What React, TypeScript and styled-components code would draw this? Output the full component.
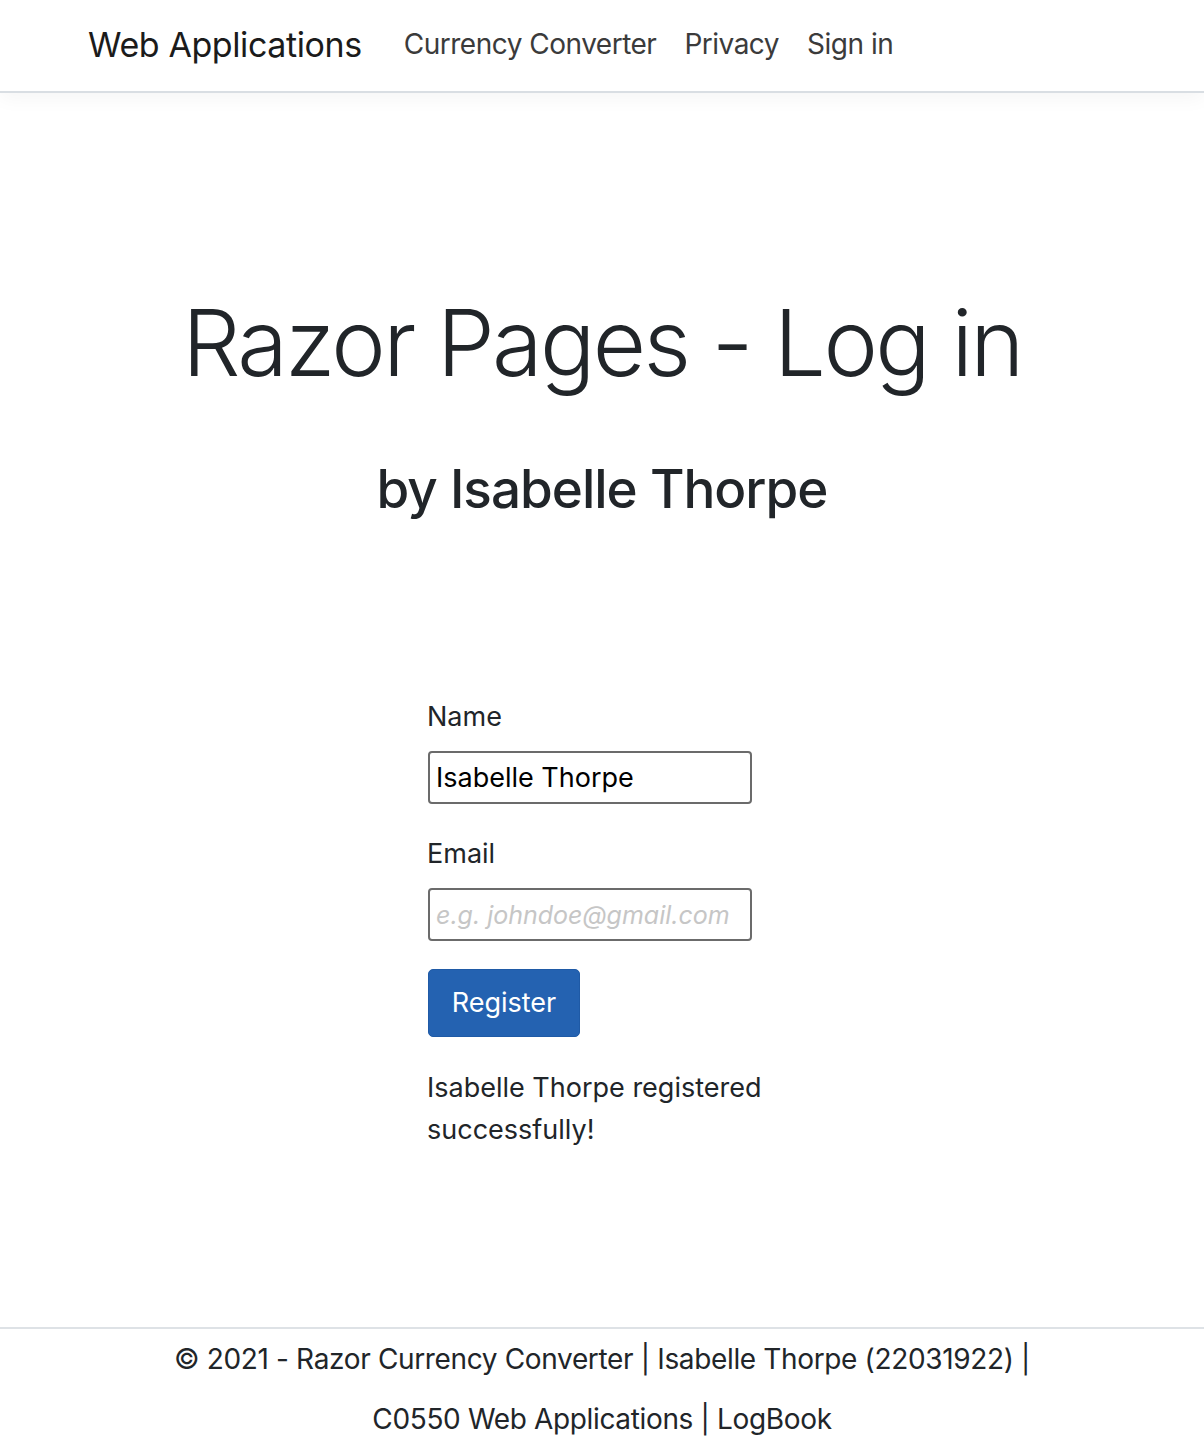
import React, { useState } from 'react';
import styled, { createGlobalStyle } from 'styled-components';

const GlobalStyle = createGlobalStyle`
  html, body {
    margin: 0;
    padding: 0;
    background: #ffffff;
  }
  body {
    font-family: Inter, "Noto Sans", "Liberation Sans", sans-serif;
    color: #212529;
    font-size: 28px;
    line-height: 1.5;
  }
  * {
    box-sizing: border-box;
  }
`;

const Navbar = styled.header`
  display: flex;
  align-items: center;
  height: 93px;
  padding: 0 0 3px 88px;
  background: #ffffff;
  border-bottom: 2px solid #d9dee3;
  box-shadow: 0 6px 18px rgba(0, 0, 0, 0.04);
`;

const Brand = styled.a`
  font-size: 34px;
  color: #1b1b1b;
  text-decoration: none;
  margin-right: 28px;
  letter-spacing: -0.4px;
`;

const NavLinks = styled.nav`
  display: flex;
`;

const NavLink = styled.a`
  font-size: 28px;
  color: #3b3b3b;
  padding: 0 14px;
  text-decoration: none;
  letter-spacing: -0.5px;
`;

const Main = styled.main`
  padding-top: 195px;
`;

const Hero = styled.section`
  text-align: center;
`;

const Title = styled.h1`
  margin: 0;
  font-size: 92px;
  font-weight: 300;
  line-height: 1.2;
  letter-spacing: -2.6px;
`;

const Subtitle = styled.h2`
  margin: 60px 0 0;
  font-size: 53px;
  font-weight: 500;
  line-height: 1.2;
  letter-spacing: -1px;
`;

const Row = styled.div`
  display: grid;
  grid-template-columns: repeat(3, 380px);
  width: 1140px;
  margin: 174px auto 0;
`;

const FormCol = styled.form`
  grid-column: 2;
  padding: 0 15px;
`;

const Label = styled.label`
  display: block;
  font-size: 27px;
  line-height: 42px;
  margin-bottom: 13px;
`;

const Field = styled.div<{ $gap: number }>`
  margin-bottom: ${(p) => p.$gap}px;
`;

const Input = styled.input`
  display: block;
  width: 324px;
  height: 53px;
  margin-left: 1px;
  padding: 0 6px;
  font-family: Inter, "Noto Sans", "Liberation Sans", sans-serif;
  font-size: 27px;
  color: #000000;
  border: 2px solid #6b6b6b;
  border-radius: 4px;
  outline: none;
  background: #ffffff;

  &::placeholder {
    color: #c6c6c6;
    font-style: italic;
    font-size: 25px;
  }
`;

const Button = styled.button`
  display: block;
  margin-left: 1px;
  width: 152px;
  height: 68px;
  padding: 0;
  background: #2462b1;
  border: 1px solid #1f5aa6;
  border-radius: 5px;
  color: #ffffff;
  font-family: Inter, "Noto Sans", "Liberation Sans", sans-serif;
  font-size: 27px;
  cursor: pointer;
`;

const Message = styled.p`
  margin: 30px 0 0;
  font-size: 27px;
  line-height: 42px;
`;

const Footer = styled.footer`
  margin-top: 176px;
  border-top: 2px solid #dee2e6;
  text-align: center;
  line-height: 60px;
  font-size: 28px;
  color: #212529;
  letter-spacing: -0.35px;
`;

const FooterLine = styled.div`
  white-space: nowrap;
`;

export default function App() {
  const [name, setName] = useState('Isabelle Thorpe');
  const [email, setEmail] = useState('');

  return (
    <>
      <GlobalStyle />
      <Navbar>
        <Brand href="#">Web Applications</Brand>
        <NavLinks>
          <NavLink href="#">Currency Converter</NavLink>
          <NavLink href="#">Privacy</NavLink>
          <NavLink href="#">Sign in</NavLink>
        </NavLinks>
      </Navbar>
      <Main>
        <Hero>
          <Title>Razor Pages - Log in</Title>
          <Subtitle>by Isabelle Thorpe</Subtitle>
        </Hero>
        <Row>
          <FormCol onSubmit={(e) => e.preventDefault()}>
            <Field $gap={29}>
              <Label htmlFor="name">Name</Label>
              <Input id="name" value={name} onChange={(e) => setName(e.target.value)} />
            </Field>
            <Field $gap={28}>
              <Label htmlFor="email">Email</Label>
              <Input
                id="email"
                placeholder="e.g. johndoe@gmail.com"
                value={email}
                onChange={(e) => setEmail(e.target.value)}
              />
            </Field>
            <Button type="submit">Register</Button>
            <Message>Isabelle Thorpe registered successfully!</Message>
          </FormCol>
        </Row>
      </Main>
      <Footer>
        <FooterLine>© 2021 - Razor Currency Converter | Isabelle Thorpe (22031922) |</FooterLine>
        <FooterLine>C0550 Web Applications | LogBook</FooterLine>
      </Footer>
    </>
  );
}
